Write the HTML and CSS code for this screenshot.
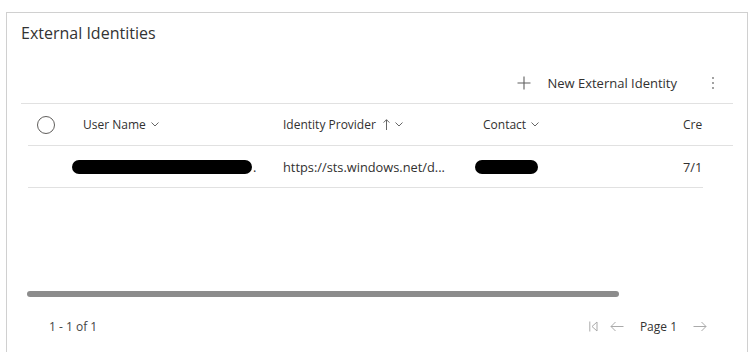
FILE: index.html
```html
<!DOCTYPE html>
<html lang="en">
<head>
    <meta charset="UTF-8">
    <meta name="viewport" content="width=device-width, initial-scale=1.0">
    <title>External Identities</title>
    <link rel="stylesheet" href="styles.css">
</head>
<body>
    <div class="card">
        <h2 class="card-title">External Identities</h2>

        <!-- command bar -->
        <div class="toolbar">
            <button class="cmd">
                <svg class="cmd-plus" width="14" height="14" viewBox="0 0 14 14"><path d="M7 0.5V13.5M0.5 7H13.5" stroke="#5f5f5f" stroke-width="1.1" fill="none"/></svg>
                <span>New External Identity</span>
            </button>
            <button class="more">
                <svg width="4" height="14" viewBox="0 0 4 14"><circle cx="2" cy="2" r="0.9" fill="#777"/><circle cx="2" cy="7" r="0.9" fill="#777"/><circle cx="2" cy="12" r="0.9" fill="#777"/></svg>
            </button>
        </div>

        <!-- grid -->
        <div class="grid">
            <div class="row head">
                <div class="cell check"><span class="radio"></span></div>
                <div class="cell">User Name <svg class="chev" width="8" height="5" viewBox="0 0 8 5"><path d="M0.5 0.5L4 4L7.5 0.5" stroke="#666" fill="none"/></svg></div>
                <div class="cell">Identity Provider
                    <svg class="sort" width="7" height="11" viewBox="0 0 7 11"><path d="M3.5 0.8V11M0.6 3.6L3.5 0.7L6.4 3.6" stroke="#555" stroke-width="0.9" fill="none"/></svg>
                    <svg class="chev" width="8" height="5" viewBox="0 0 8 5"><path d="M0.5 0.5L4 4L7.5 0.5" stroke="#666" fill="none"/></svg></div>
                <div class="cell">Contact <svg class="chev" width="8" height="5" viewBox="0 0 8 5"><path d="M0.5 0.5L4 4L7.5 0.5" stroke="#666" fill="none"/></svg></div>
                <div class="cell last">Cre</div>
            </div>
            <div class="row data">
                <div class="cell check"></div>
                <div class="cell"><span class="redact redact-name"></span><span class="dot">.</span></div>
                <div class="cell">https://sts.windows.net/d...</div>
                <div class="cell"><span class="redact redact-contact"></span></div>
                <div class="cell last">7/1</div>
            </div>
        </div>

        <div class="hscroll"><div class="thumb"></div></div>

        <!-- footer / paging -->
        <div class="footer">
            <span class="count">1 - 1 of 1</span>
            <div class="pager">
                <svg width="9" height="11" viewBox="0 0 9 11"><path d="M0.8 0.5V10.5M8 1L3 5.5L8 10Z" stroke="#aaa" stroke-width="1" fill="none"/></svg>
                <svg width="14" height="11" viewBox="0 0 14 11"><path d="M13.5 5.5H1M5.5 1L1 5.5L5.5 10" stroke="#aaa" stroke-width="1" fill="none"/></svg>
                <span class="page">Page 1</span>
                <svg width="14" height="11" viewBox="0 0 14 11"><path d="M0.5 5.5H13M8.5 1L13 5.5L8.5 10" stroke="#aaa" stroke-width="1" fill="none"/></svg>
            </div>
        </div>
    </div>
</body>
</html>
```

FILE: styles.css
```css
body {
    margin: 0;
    padding: 0;
    background-color: #ffffff;
    font-family: 'Open Sans', 'Noto Sans', sans-serif;
    color: #323130;
}

.card {
    box-sizing: border-box;
    margin: 12px 0 0 6px;
    width: 742px;
    height: 360px;
    border: 1px solid #d0d0d0;
    padding: 0 14px;
}

.card-title {
    margin: 0;
    padding-top: 9px;
    font-size: 16px;
    font-weight: 400;
    line-height: 22px;
    color: #333;
}

.toolbar {
    display: flex;
    justify-content: flex-end;
    align-items: center;
    height: 40px;
    margin-top: 19px;
    border-bottom: 1px solid #e1e1e1;
}

.toolbar button {
    background: none;
    border: none;
    padding: 0;
    font-family: inherit;
    cursor: pointer;
}

.cmd {
    display: flex;
    align-items: center;
    gap: 16px;
    font-size: 13px;
    color: #323130;
}

.more {
    display: flex;
    margin: 0 18px 0 34px;
}

.grid {
    margin-left: 7px;
    overflow: hidden;
}

.row {
    display: flex;
    align-items: center;
    height: 41px;
    border-bottom: 1px solid #e1e1e1;
    font-size: 12px;
    white-space: nowrap;
}

.row.data {
    width: 675px;
    font-size: 12.8px;
}

.cell {
    flex: 0 0 200px;
    box-sizing: border-box;
    padding-left: 8px;
    display: flex;
    align-items: center;
}

.cell.check {
    flex: 0 0 47px;
    padding-left: 9px;
}

.cell.last {
    flex: 0 0 28px;
    overflow: hidden;
}

.radio {
    width: 16px;
    height: 16px;
    border: 1px solid #605e5c;
    border-radius: 50%;
}

.chev {
    margin-left: 5px;
}

.sort {
    margin-left: 7px;
}

.redact {
    display: inline-block;
    height: 14px;
    background-color: #000;
    border-radius: 7px;
}

.redact-name {
    width: 180px;
    margin-left: -11px;
}

.redact-contact {
    width: 63px;
    margin-left: -8px;
}

.dot {
    margin-left: 1px;
}

.hscroll {
    margin: 103px 0 0 6px;
    height: 6px;
}

.thumb {
    width: 592px;
    height: 6px;
    background-color: #8c8c8c;
    border-radius: 3px;
}

.footer {
    display: flex;
    justify-content: space-between;
    align-items: center;
    margin-top: 18px;
    height: 22px;
    font-size: 12px;
}

.count {
    padding-left: 28px;
    color: #444;
}

.pager {
    display: flex;
    align-items: center;
    gap: 12px;
    margin-right: 26px;
}

.page {
    margin: 0 4px;
    color: #333;
}
```
